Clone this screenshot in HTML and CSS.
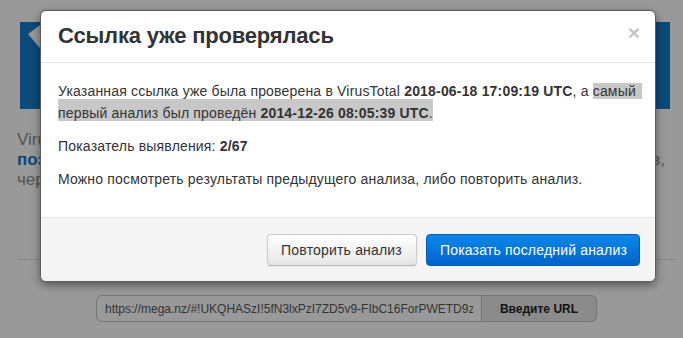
FILE: index.html
```html
<!DOCTYPE html>
<html lang="ru">
<head>
<meta charset="utf-8">
<title>VirusTotal</title>
<link rel="stylesheet" href="styles.css">
</head>
<body>
<div class="screen">
  <div class="page">
    <div class="banner">
      <svg class="logo" width="40" height="87" viewBox="0 0 40 87" aria-hidden="true">
        <polygon points="8,12 22,1.5 22,28.5" fill="#999999"/>
      </svg>
    </div>
    <div class="intro">
      <div class="line">VirusTotal — бесплатный онлайн-сервис, который</div>
      <div class="line split"><span><b class="accent">позволяет проверять</b> файлы</span><span>вирусов,</span></div>
      <div class="line">червей, троянов и других вредоносных программ.</div>
    </div>
    <hr class="rule">
    <form class="search">
      <input class="url" type="text" value="https://mega.nz/#!UKQHASzI!5fN3lxPzI7ZD5v9-FIbC16ForPWETD9z">
      <button class="go" type="button">Введите URL</button>
    </form>
  </div>

  <div class="modal">
    <div class="modal-header">
      <h4 class="modal-title">Ссылка уже проверялась</h4>
      <button class="close" type="button">×</button>
    </div>
    <div class="modal-body">
      <p>Указанная ссылка уже была проверена в VirusTotal <b>2018-06-18 17:09:19 UTC</b>, а <span class="sel sel-first">самый</span> <span class="sel sel-next">первый анализ был проведён <b>2014-12-26 08:05:39 UTC</b>.</span></p>
      <p>Показатель выявления: <b>2/67</b></p>
      <p>Можно посмотреть результаты предыдущего анализа, либо повторить анализ.</p>
    </div>
    <div class="modal-footer">
      <button class="btn btn-default" type="button">Повторить анализ</button>
      <button class="btn btn-primary" type="button">Показать последний анализ</button>
    </div>
  </div>
</div>
</body>
</html>
```

FILE: styles.css
```css
html, body {
  margin: 0;
  height: 100%;
}

body {
  font-family: "Liberation Sans", Arial, sans-serif;
  color: #333333;
  overflow: hidden;
}

/* dimmed page behind the dialog */
.screen {
  position: relative;
  height: 100%;
  background-color: #999999;
}

.page {
  padding: 22px 7px 0 17px;
}

.banner {
  margin: 0 6px 0 3px;
  height: 87px;
  background-color: #0c4a7a;
}

.logo {
  display: block;
}

.intro {
  margin-top: 21px;
  font-size: 17px;
  line-height: 20px;
  color: #525252;
}

.line {
  white-space: nowrap;
}

.split {
  display: flex;
  justify-content: space-between;
  padding-right: 11px;
}

.accent {
  color: #0d4678;
  font-weight: bold;
}

.rule {
  margin: 69px 0 0;
  height: 0;
  border: 0;
  border-top: 1px solid #878787;
}

.search {
  display: flex;
  justify-content: center;
  margin: 35px 0 0;
}

.url {
  box-sizing: border-box;
  width: 386px;
  height: 27px;
  margin: 0;
  padding: 0 8px;
  border: 1px solid #757575;
  border-radius: 6px 0 0 6px;
  background: #999999;
  font: 12px "Liberation Sans", Arial, sans-serif;
  color: #333333;
  outline: none;
}

.go {
  box-sizing: border-box;
  width: 115px;
  height: 27px;
  margin: 0;
  padding: 0;
  border: 1px solid #757575;
  border-left: 0;
  border-radius: 0 6px 6px 0;
  background: #8b8b8b;
  font: bold 12px "Liberation Sans", Arial, sans-serif;
  color: #121212;
}

/* dialog */
.modal {
  position: absolute;
  top: 10px;
  left: 40px;
  width: 616px;
  box-sizing: border-box;
  background: #ffffff;
  border: 1px solid #5c5c5c;
  border-radius: 6px;
  box-shadow: 0 3px 9px rgba(0, 0, 0, 0.45);
}

.modal-header {
  display: flex;
  justify-content: space-between;
  align-items: flex-start;
  padding: 12px 15px 13px 17px;
  border-bottom: 1px solid #e5e5e5;
}

.modal-title {
  margin: 0;
  font-size: 22px;
  line-height: 26px;
  font-weight: bold;
  letter-spacing: -0.18px;
  color: #333333;
}

.close {
  margin: -1px 0 0;
  padding: 0;
  border: 0;
  background: none;
  font: bold 21px/21px "Liberation Sans", Arial, sans-serif;
  color: #c4c4c4;
}

.modal-body {
  padding: 17px 15px 16px 17px;
  font-size: 14px;
  line-height: 22px;
  letter-spacing: 0.18px;
  color: #333333;
}

.modal-body p {
  margin: 0 0 11px;
}

.sel {
  background: #c8c8c8;
}

.sel-first {
  box-shadow: 6px 0 0 #c8c8c8;
}

.sel-next {
  padding-top: 6px;
}

.modal-footer {
  display: flex;
  justify-content: flex-end;
  gap: 9px;
  padding: 16px 15px 15px;
  background: #f5f5f5;
  border-top: 1px solid #e5e5e5;
  border-radius: 0 0 6px 6px;
}

.btn {
  box-sizing: border-box;
  height: 32px;
  margin: 0;
  padding: 0 12px 0 13px;
  border-radius: 4px;
  font: 14px "Liberation Sans", Arial, sans-serif;
  letter-spacing: 0.18px;
}

.btn-default {
  padding: 0 14px 0 13px;
  background: linear-gradient(#ffffff, #e6e6e6);
  border: 1px solid #cccccc;
  border-bottom-color: #b5b5b5;
  color: #333333;
  box-shadow: 0 1px 2px rgba(0, 0, 0, 0.06);
}

.btn-primary {
  background: linear-gradient(#0a88ea, #0063cc);
  border: 1px solid #0059bb;
  color: #ffffff;
}
```
